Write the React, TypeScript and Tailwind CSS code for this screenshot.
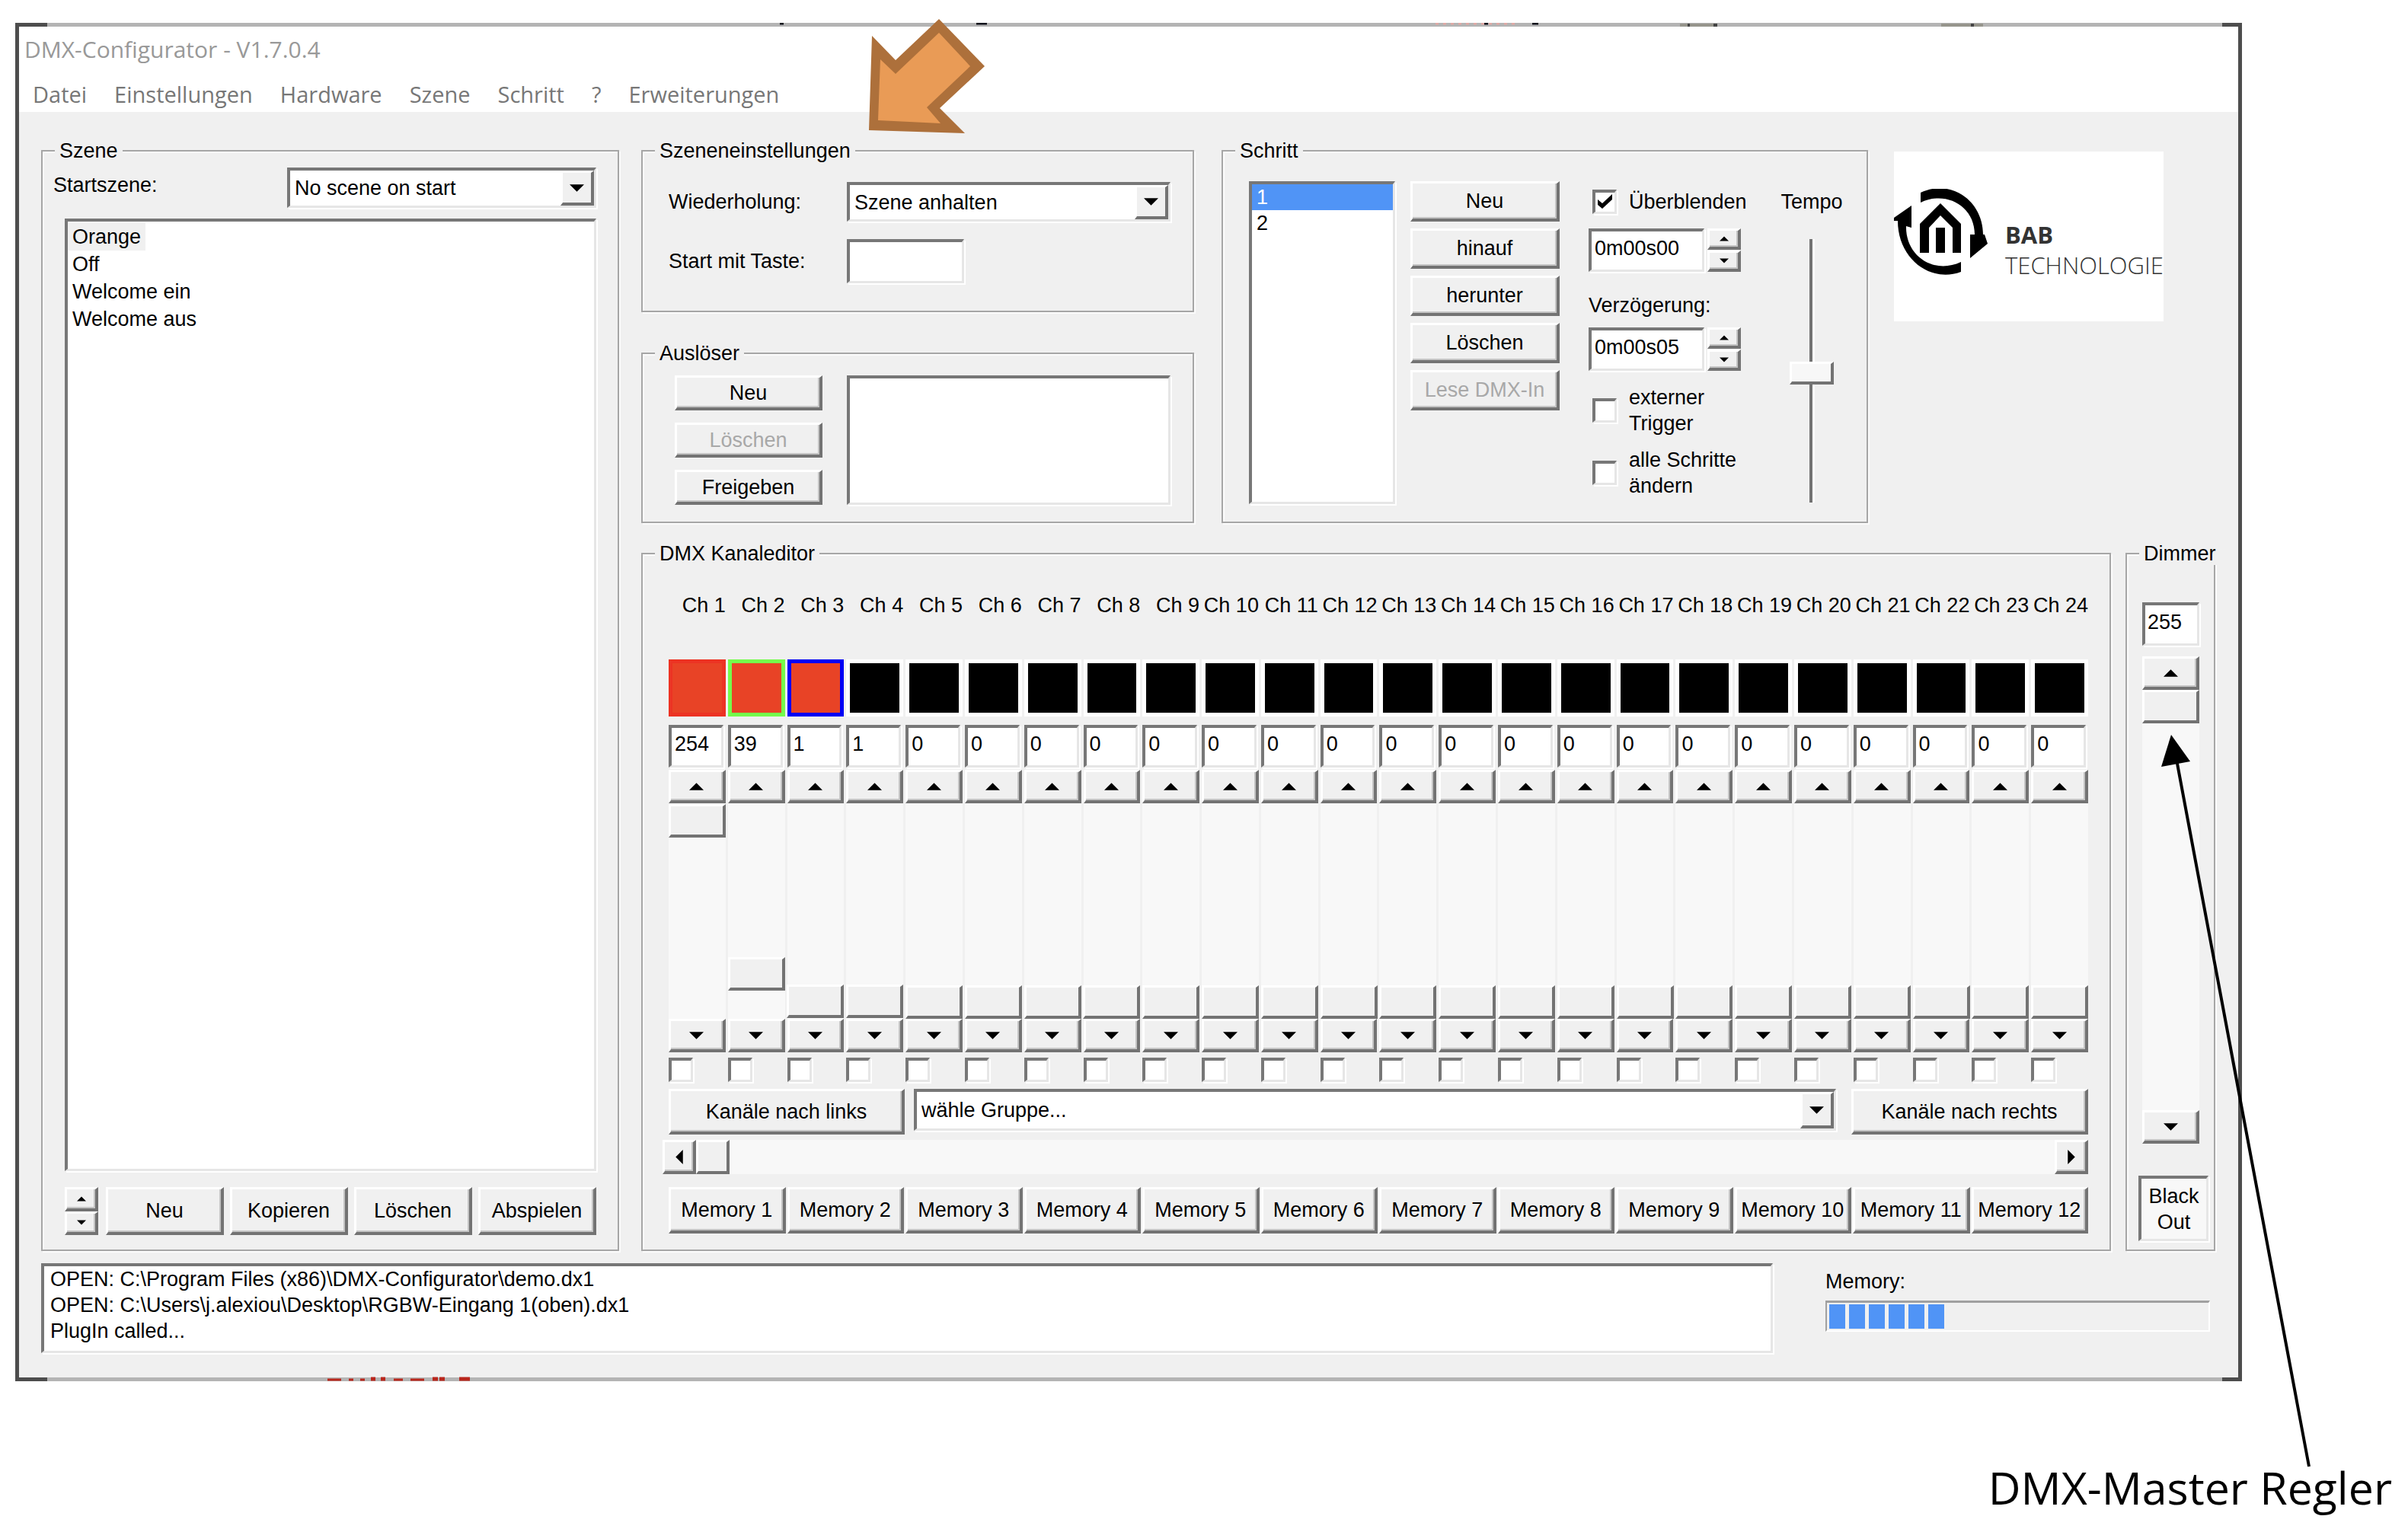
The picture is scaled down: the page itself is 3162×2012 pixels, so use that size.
import React from "react";

const raised =
  "bg-[#f0f0f0] border-t-[3px] border-l-[3px] border-r-4 border-b-4 border-t-white border-l-white border-r-[#737373] border-b-[#737373]";
const sunkenEdge =
  "border-t-4 border-l-4 border-r-[3px] border-b-[3px] border-t-[#777777] border-l-[#777777] border-r-[#e6e6e6] border-b-[#e6e6e6] shadow-[2px_2px_0_#ffffff]";
const sunken = `bg-white ${sunkenEdge}`;

type Dir = "up" | "down" | "left" | "right";

const shapes: Record<Dir, string> = {
  up: "0,9 9,0 18,9",
  down: "0,0 18,0 9,9",
  left: "9,0 9,18 0,9",
  right: "0,0 9,9 0,18",
};

function Arrow({ dir, small }: { dir: Dir; small?: boolean }) {
  const flat = dir === "up" || dir === "down";
  return (
    <svg
      className={small ? "h-[7px] w-[12px]" : flat ? "h-[10px] w-[19px]" : "h-[19px] w-[10px]"}
      viewBox={flat ? "0 0 18 9" : "0 0 9 18"}
      aria-hidden="true"
    >
      <polygon points={shapes[dir]} fill="#000" />
    </svg>
  );
}

function Btn({
  children,
  className = "",
  disabled,
  label,
}: {
  children?: React.ReactNode;
  className?: string;
  disabled?: boolean;
  label?: string;
}) {
  return (
    <button
      type="button"
      aria-label={label}
      disabled={disabled}
      className={`${raised} flex items-center justify-center whitespace-nowrap shadow-[inset_-2px_-2px_0_#c4c4c4] disabled:text-[#a8a8a8] ${className}`}
    >
      {children}
    </button>
  );
}

function Group({
  title,
  className = "",
  children,
}: {
  title: string;
  className?: string;
  children: React.ReactNode;
}) {
  return (
    <fieldset
      className={`min-w-0 border-2 border-[#a6a6a6] shadow-[inset_2px_2px_0_#fbfbfb,2px_2px_0_#fbfbfb] ${className}`}
    >
      <legend className="ml-4 bg-[#f0f0f0] px-[6px]">{title}</legend>
      {children}
    </fieldset>
  );
}

function Combo({ id, value, className = "" }: { id: string; value: string; className?: string }) {
  return (
    <div className={`relative ${className}`}>
      <select
        id={id}
        aria-label={value}
        className={`${sunken} block h-full w-full appearance-none rounded-none pl-[6px] pr-12`}
      >
        <option>{value}</option>
      </select>
      <span
        className={`${raised} pointer-events-none absolute top-1 right-[3px] bottom-[3px] flex w-11 items-center justify-center`}
      >
        <Arrow dir="down" />
      </span>
    </div>
  );
}

function Spin({ className = "" }: { className?: string }) {
  return (
    <div className={`flex w-11 flex-col ${className}`}>
      <Btn label="höher" className="min-h-0 flex-1">
        <Arrow dir="up" small />
      </Btn>
      <Btn label="niedriger" className="min-h-0 flex-1">
        <Arrow dir="down" small />
      </Btn>
    </div>
  );
}

const box = `${sunken} peer h-8 w-8 shrink-0 appearance-none`;

function Check({ children, checked }: { children: React.ReactNode; checked?: boolean }) {
  return (
    <label className="flex items-center gap-4 leading-[34px]">
      <span className="relative flex">
        <input type="checkbox" defaultChecked={checked} className={box} />
        <svg
          className="pointer-events-none absolute top-[6px] left-[6px] hidden h-5 w-5 peer-checked:block"
          viewBox="0 0 20 20"
          aria-hidden="true"
        >
          <path d="M1 7v7l6 5L20 7V0L7 12Z" fill="#000" />
        </svg>
      </span>
      <span>{children}</span>
    </label>
  );
}

const vertical =
  "block w-full appearance-none bg-[#f8f8f8] [writing-mode:vertical-lr] [direction:rtl] [&::-webkit-slider-thumb]:h-11 [&::-webkit-slider-thumb]:w-[75px] [&::-webkit-slider-thumb]:appearance-none [&::-webkit-slider-thumb]:border-t-[3px] [&::-webkit-slider-thumb]:border-l-[3px] [&::-webkit-slider-thumb]:border-r-4 [&::-webkit-slider-thumb]:border-b-4 [&::-webkit-slider-thumb]:border-t-white [&::-webkit-slider-thumb]:border-l-white [&::-webkit-slider-thumb]:border-r-[#737373] [&::-webkit-slider-thumb]:border-b-[#737373] [&::-webkit-slider-thumb]:bg-[#f0f0f0]";

const swatches = [
  "bg-[#e84326] border-[#ec3323]",
  "bg-[#e84326] border-[#75fb4c]",
  "bg-[#e84326] border-[#0000f5]",
];
const channels = Array.from({ length: 24 }, (_, i) => ({
  n: i + 1,
  value: [254, 39, 1, 1][i] ?? 0,
  swatch: swatches[i] ?? "bg-black border-white",
}));

function Channel({ n, value, swatch }: { n: number; value: number; swatch: string }) {
  return (
    <div className="flex min-w-0 flex-col">
      <label htmlFor={`ch${n}`} className="flex justify-end whitespace-nowrap">
        Ch {n}
      </label>
      <div className={`mt-14 h-[75px] border-[5px] ${swatch}`} />
      <input id={`ch${n}`} defaultValue={value} className={`${sunken} mt-[11px] mr-[3px] h-14 min-w-0 pb-[6px] pl-1`} />
      <Btn label={`Kanal ${n} höher`} className="mt-[3px] h-11">
        <Arrow dir="up" />
      </Btn>
      <input
        type="range"
        aria-label={`Kanal ${n}`}
        min={0}
        max={255}
        defaultValue={value}
        className={`${vertical} h-[283px]`}
      />
      <Btn label={`Kanal ${n} niedriger`} className="h-11">
        <Arrow dir="down" />
      </Btn>
      <input type="checkbox" aria-label={`Kanal ${n} wählen`} className={`${box} mt-[7px]`} />
    </div>
  );
}

function Logo() {
  return (
    <div className="mt-4 flex h-[223px] w-[354px] items-start bg-white pt-[49px]">
      <svg className="h-[114px] w-[124px] shrink-0" viewBox="0 0 124 114" aria-hidden="true">
        <path d="M35 5C75-14 117 16 117 60H119L123 72L100 91V60H106C106 22 68 2 35 18Z" fill="#000" />
        <path d="M88 96V109C48 124 5 92 5 42H0V38L23 22V51L16 49C15 88 52 113 88 96Z" fill="#000" />
        <path d="M34 84V46L61 19L88 46V84H77V51L61 35L46 51V84Z" fill="#000" />
        <rect x="55" y="51" width="12" height="33" fill="#000" />
      </svg>
      <div className="ml-[22px] pt-10 font-['Open_Sans',sans-serif] text-[31px] leading-10 text-[#333333]">
        <div className="font-bold">BAB</div>
        <div className="font-light">TECHNOLOGIE</div>
      </div>
    </div>
  );
}

const menu = ["Datei", "Einstellungen", "Hardware", "Szene", "Schritt", "?", "Erweiterungen"];

export default function App() {
  return (
    <div className="relative min-h-screen bg-white pt-[30px] pr-[218px] pl-5 font-['Liberation_Sans',Arial,sans-serif] text-[27px] leading-[30px] text-black">
      <main className="relative border-x-[5px] border-y-[5px] border-x-[#4d4d4d] border-y-[#b4b4b4]">
        <span className="absolute -top-[5px] -left-[5px] h-[5px] w-[42px] bg-[#4d4d4d]" />
        <span className="absolute -top-[5px] -right-[5px] h-[5px] w-[26px] bg-[#4d4d4d]" />
        <span className="absolute -bottom-[5px] -left-[5px] h-[5px] w-[42px] bg-[#4d4d4d]" />
        <span className="absolute -right-[5px] -bottom-[5px] h-[5px] w-[26px] bg-[#4d4d4d]" />
        <svg
          className="pointer-events-none absolute -top-[5px] left-0 h-[5px] w-[2600px]"
          viewBox="0 0 2600 5"
          aria-hidden="true"
        >
          <path d="M1860 1H1968" stroke="#e0a8a4" strokeWidth="3" strokeDasharray="4 6" />
          <path d="M999 1h5M1257 1h14M1924 1h5M1987 1h8" stroke="#10131c" strokeWidth="3" />
          <path d="M2181 3h44M2524 3h55" stroke="#96958c" strokeWidth="4" />
          <path d="M2191 3h3M2225 3h5M2563 3h4" stroke="#444444" strokeWidth="4" />
        </svg>
        <svg
          className="pointer-events-none absolute -bottom-[5px] left-[405px] h-[6px] w-[190px]"
          viewBox="0 0 190 6"
          aria-hidden="true"
        >
          <path d="M0 4h18M28 4h6M43 4h6M87 4h12M109 4h18" stroke="#b8261c" strokeWidth="3" />
          <path d="M57 3h6M70 3h6M138 3h7M147 3h7M173 3h14" stroke="#b8261c" strokeWidth="5" />
        </svg>

        <header className="h-[112px] bg-white font-['Open_Sans',sans-serif]">
          <h1 className="pt-2 pl-[7px] text-[30px] leading-[44px] text-[#999999]">DMX-Configurator - V1.7.0.4</h1>
          <nav className="flex gap-9 pt-[17px] pl-[18px] text-[29px] leading-10 text-[#777777]">
            {menu.map((m) => (
              <button type="button" key={m}>
                {m}
              </button>
            ))}
          </nav>
        </header>

        <div className="bg-[#f0f0f0] pt-9 pr-[30px] pb-8 pl-[29px]">
          <div className="flex gap-[29px]">
            <Group title="Szene" className="flex w-[759px] shrink-0 flex-col">
              <div className="flex h-full flex-col pt-[7px] pr-[28px] pb-[19px] pl-[14px]">
                <div className="flex justify-between">
                  <label htmlFor="start" className="leading-[46px]">
                    Startszene:
                  </label>
                  <Combo id="start" value="No scene on start" className="h-[53px] w-[406px]" />
                </div>
                <ul className={`${sunken} mt-[14px] ml-[15px] flex-1 py-[2px] leading-9`}>
                  {["Orange", "Off", "Welcome ein", "Welcome aus"].map((s, i) => (
                    <li key={s}>
                      <span className={i === 0 ? "inline-block bg-[#f0f0f0] px-[6px]" : "px-[6px]"}>{s}</span>
                    </li>
                  ))}
                </ul>
                <div className="mt-[21px] ml-[15px] flex h-[63px] gap-2">
                  <Spin className="mr-[2px]" />
                  {["Neu", "Kopieren", "Löschen", "Abspielen"].map((s) => (
                    <Btn key={s} className="flex-1">
                      {s}
                    </Btn>
                  ))}
                </div>
              </div>
            </Group>

            <div className="flex min-w-0 flex-1 flex-col gap-[25px]">
              <div className="flex">
                <div className="flex w-[726px] shrink-0 flex-col gap-[39px]">
                  <Group title="Szeneneinstellungen">
                    <div className="grid grid-cols-[234px_1fr] gap-y-[23px] pt-[26px] pr-[29px] pb-9 pl-[34px]">
                      <label htmlFor="rep" className="leading-[52px]">
                        Wiederholung:
                      </label>
                      <Combo id="rep" value="Szene anhalten" className="h-[52px]" />
                      <label htmlFor="key" className="leading-[58px]">
                        Start mit Taste:
                      </label>
                      <input id="key" className={`${sunken} h-[58px] w-[154px]`} />
                    </div>
                  </Group>
                  <Group title="Auslöser">
                    <div className="grid grid-cols-[194px_1fr] gap-x-8 pt-[14px] pr-[29px] pb-[22px] pl-[42px]">
                      <div className="flex flex-col gap-4">
                        <Btn className="h-[46px]">Neu</Btn>
                        <Btn className="h-[46px]" disabled>
                          Löschen
                        </Btn>
                        <Btn className="h-[46px]">Freigeben</Btn>
                      </div>
                      <ul className={sunken} />
                    </div>
                  </Group>
                </div>

                <Group title="Schritt" className="ml-9 w-[849px] shrink-0">
                  <div className="flex pt-[25px] pl-[34px]">
                    <ul className={`${sunken} h-[424px] w-[192px] leading-[34px]`}>
                      <li className="bg-[#5094f6] pl-[6px] text-white">1</li>
                      <li className="pl-[6px]">2</li>
                    </ul>
                    <div className="ml-5 flex w-[196px] flex-col gap-[9px]">
                      {["Neu", "hinauf", "herunter", "Löschen", "Lese DMX-In"].map((s, i) => (
                        <Btn key={s} className="h-[53px]" disabled={i === 4}>
                          {s}
                        </Btn>
                      ))}
                    </div>
                    <div className="ml-[38px] w-[220px]">
                      <div className="pt-[10px] pl-[5px]">
                        <Check checked>Überblenden</Check>
                      </div>
                      <div className="mt-[18px] flex gap-1">
                        <input
                          aria-label="Überblenden Zeit"
                          defaultValue="0m00s00"
                          className={`${sunken} h-[57px] w-[152px] pb-[6px] pl-1`}
                        />
                        <Spin className="gap-px" />
                      </div>
                      <label htmlFor="delay" className="mt-[29px] block">
                        Verzögerung:
                      </label>
                      <div className="mt-[14px] flex gap-1">
                        <input
                          id="delay"
                          defaultValue="0m00s05"
                          className={`${sunken} h-[57px] w-[152px] pb-[6px] pl-1`}
                        />
                        <Spin className="gap-px" />
                      </div>
                      <div className="mt-[18px] flex flex-col gap-[14px] pl-[5px]">
                        <Check>
                          externer
                          <br />
                          Trigger
                        </Check>
                        <Check>
                          alle Schritte
                          <br />
                          ändern
                        </Check>
                      </div>
                    </div>
                    <div className="ml-6 flex w-[98px] flex-col items-center pt-3">
                      <label htmlFor="tempo">Tempo</label>
                      <input
                        id="tempo"
                        type="range"
                        min={0}
                        max={100}
                        defaultValue={49}
                        className="mt-[34px] h-[346px] w-[58px] appearance-none bg-transparent bg-[linear-gradient(90deg,#737373_4px,#ffffff_4px)] bg-[length:7px_100%] bg-center bg-no-repeat [direction:rtl] [writing-mode:vertical-lr] [&::-webkit-slider-thumb]:h-[30px] [&::-webkit-slider-thumb]:w-[58px] [&::-webkit-slider-thumb]:appearance-none [&::-webkit-slider-thumb]:border-t-[3px] [&::-webkit-slider-thumb]:border-r-4 [&::-webkit-slider-thumb]:border-b-4 [&::-webkit-slider-thumb]:border-l-[3px] [&::-webkit-slider-thumb]:border-t-white [&::-webkit-slider-thumb]:border-r-[#737373] [&::-webkit-slider-thumb]:border-b-[#737373] [&::-webkit-slider-thumb]:border-l-white [&::-webkit-slider-thumb]:bg-[#f7f7f7]"
                      />
                    </div>
                  </div>
                </Group>

                <div className="ml-[34px]">
                  <Logo />
                </div>
              </div>

              <div className="flex gap-[19px]">
                <Group title="DMX Kanaleditor" className="flex-1">
                  <div className="pt-[38px] pr-[28px] pb-[21px] pl-[34px]">
                    <div className="grid grid-cols-[repeat(24,minmax(0,1fr))] gap-x-[3px]">
                      {channels.map((c) => (
                        <Channel key={c.n} {...c} />
                      ))}
                    </div>
                    <div className="mt-[9px] flex items-start">
                      <Btn className="h-[60px] w-[310px]">Kanäle nach links</Btn>
                      <Combo id="group" value="wähle Gruppe..." className="mr-5 ml-3 h-[55px] flex-1" />
                      <Btn className="h-[60px] w-[311px]">Kanäle nach rechts</Btn>
                    </div>
                    <div className="mt-[7px] -ml-2 flex h-[45px]">
                      <Btn label="nach links" className="w-11">
                        <Arrow dir="left" />
                      </Btn>
                      <input
                        type="range"
                        aria-label="Kanalbereich"
                        min={0}
                        max={100}
                        defaultValue={0}
                        className="h-full min-w-0 flex-1 appearance-none bg-[#f8f8f8] [&::-webkit-slider-thumb]:h-[45px] [&::-webkit-slider-thumb]:w-11 [&::-webkit-slider-thumb]:appearance-none [&::-webkit-slider-thumb]:border-t-[3px] [&::-webkit-slider-thumb]:border-r-4 [&::-webkit-slider-thumb]:border-b-4 [&::-webkit-slider-thumb]:border-l-[3px] [&::-webkit-slider-thumb]:border-t-white [&::-webkit-slider-thumb]:border-r-[#737373] [&::-webkit-slider-thumb]:border-b-[#737373] [&::-webkit-slider-thumb]:border-l-white [&::-webkit-slider-thumb]:bg-[#f0f0f0]"
                      />
                      <Btn label="nach rechts" className="w-11">
                        <Arrow dir="right" />
                      </Btn>
                    </div>
                    <div className="mt-[17px] grid grid-cols-12 gap-x-[2px]">
                      {Array.from({ length: 12 }, (_, i) => (
                        <Btn key={i} className="h-[61px]">
                          Memory {i + 1}
                        </Btn>
                      ))}
                    </div>
                  </div>
                </Group>

                <Group title="Dimmer" className="w-[118px] shrink-0">
                  <div className="flex flex-col pt-[49px] pr-[7px] pl-[15px]">
                    <div className="mr-3 ml-[5px] flex flex-col">
                      <input aria-label="Dimmer" defaultValue="255" className={`${sunken} h-[57px] min-w-0 pb-[6px] pl-[3px]`} />
                      <Btn label="heller" className="mt-[14px] h-11">
                        <Arrow dir="up" />
                      </Btn>
                      <input
                        type="range"
                        aria-label="Dimmer Regler"
                        min={0}
                        max={255}
                        defaultValue={255}
                        className={`${vertical} h-[552px]`}
                      />
                      <Btn label="dunkler" className="h-11">
                        <Arrow dir="down" />
                      </Btn>
                    </div>
                    <button type="button" className={`${sunkenEdge} mt-[42px] h-[86px] bg-[#f8f8f8] leading-[34px]`}>
                      Black Out
                    </button>
                  </div>
                </Group>
              </div>
            </div>
          </div>

          <div className="mt-4 flex">
            <textarea
              readOnly
              aria-label="Protokoll"
              className={`${sunken} block h-[118px] min-w-0 flex-1 resize-none overflow-hidden pl-2 leading-[34px]`}
              value={
                "OPEN: C:\\Program Files (x86)\\DMX-Configurator\\demo.dx1\nOPEN: C:\\Users\\j.alexiou\\Desktop\\RGBW-Eingang 1(oben).dx1\nPlugIn called..."
              }
            />
            <div className="mr-[7px] ml-[69px] w-[505px] pt-[9px]">
              <div id="mem">Memory:</div>
              <div
                role="progressbar"
                aria-labelledby="mem"
                aria-valuenow={30}
                className="mt-[10px] flex h-[41px] gap-[5px] border-t-[3px] border-r-2 border-b-2 border-l-2 border-t-[#a0a0a0] border-r-white border-b-white border-l-[#a0a0a0] px-[3px] py-[2px]"
              >
                {[1, 2, 3, 4, 5, 6].map((b) => (
                  <span key={b} className="w-[21px] bg-[#5094f6]" />
                ))}
              </div>
            </div>
          </div>
        </div>
      </main>

      <div className="absolute right-[21px] bottom-[19px] font-['Open_Sans',sans-serif] text-[59px] leading-[80px]">
        DMX-Master Regler
      </div>

      <svg
        className="pointer-events-none absolute top-[962px] right-[122px] h-[968px] w-[200px] overflow-visible"
        viewBox="0 0 200 968"
        aria-hidden="true"
      >
        <path d="M17 30L192 964" stroke="#000" strokeWidth="4" />
        <polygon points="11,3 36,38 -2,45" fill="#000" />
      </svg>

      <svg
        className="pointer-events-none absolute top-[25px] left-[1141px] h-[150px] w-[152px]"
        viewBox="0 0 152 150"
        aria-hidden="true"
      >
        <polygon points="92,0 152,62 93,117 126,150 0,146 4,22 35,54" fill="#ad703b" />
        <polygon points="92,18 133,62 76,116 94,137 12,133 15,53 35,72" fill="#e99b56" />
      </svg>
    </div>
  );
}
